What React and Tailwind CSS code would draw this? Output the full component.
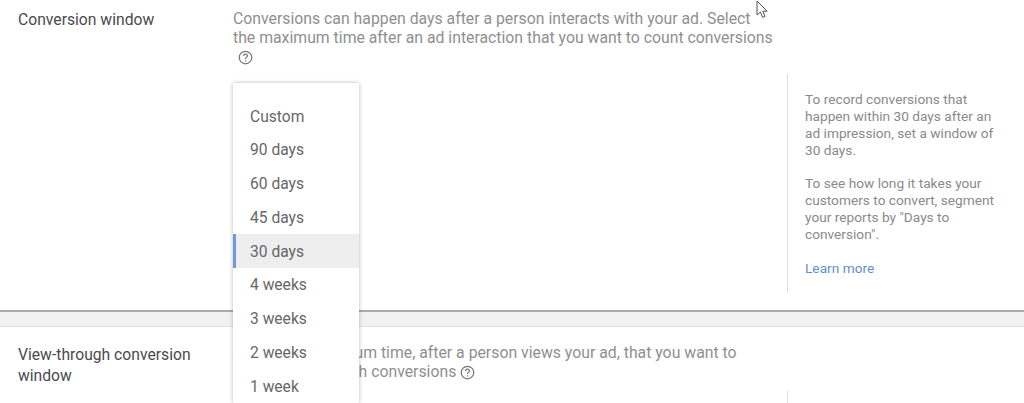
import React from "react";

const options = ["Custom", "90 days", "60 days", "45 days", "30 days", "4 weeks", "3 weeks", "2 weeks", "1 week"];

function HelpIcon() {
  return (
    <svg width="15" height="15" viewBox="0 0 24 24" fill="none" stroke="#757575" strokeWidth="2" className="inline-block align-[-3px]">
      <circle cx="12" cy="12" r="10" />
      <path d="M9 9.6a3 3 0 0 1 6 0c0 2-3 2.4-3 4.6" />
      <path d="M12 16.4v2" />
    </svg>
  );
}

function Cursor() {
  return (
    <svg width="13" height="20" viewBox="0 0 13 20" className="absolute left-[756px] top-0">
      <path d="M1 1v14l3.4-3 2.2 5.4 2.4-1-2.2-5.2h4.4z" fill="#fff" stroke="#555" strokeWidth="1" strokeLinejoin="round" />
    </svg>
  );
}

function Dropdown() {
  return (
    <div className="absolute left-[233px] top-[83px] w-[126px] h-[320px] bg-white pt-[16px] shadow-[0_0_4px_rgba(0,0,0,0.3)]">
      {options.map((o) => (
        <div
          key={o}
          className={
            "h-[33.75px] flex items-center pt-[3px] text-[15.6px] text-[#66666b] " +
            (o === "30 days" ? "bg-[#eeeeee] border-l-[3px] border-[#6f9ad8] pl-[14px]" : "pl-[17px]")
          }
        >
          {o}
        </div>
      ))}
    </div>
  );
}

export default function App() {
  return (
    <div className="relative w-[1024px] h-[403px] overflow-hidden bg-white font-['Roboto',sans-serif]">
      <div className="flex h-[310px]">
        <div className="w-[233px] shrink-0 pl-[18px] pt-[9px] text-[15.7px] leading-[21px] text-[#4a4a4f]">Conversion window</div>
        <div className="w-[554px] shrink-0 pt-[9px] text-[15.8px] leading-[19px] text-[#8f8f8f]">
          <p className="w-[541px]">
            Conversions can happen days after a person interacts with your ad. Select the maximum time after an ad interaction that you want to count conversions
          </p>
          <div className="pl-[5px]"><HelpIcon /></div>
        </div>
        <div className="mt-[74px] h-[219px] flex-1 border-l border-[#dddddd] pl-[17px] pr-[20px] pt-[17px] text-[13.7px] leading-[17px] text-[#8a8a8a]">
          <p>To record conversions that happen within 30 days after an ad impression, set a window of 30 days.</p>
          <p className="mt-[16px]">To see how long it takes your customers to convert, segment your reports by "Days to conversion".</p>
          <p className="mt-[17px] text-[#5f8fd0]">Learn more</p>
        </div>
      </div>
      <div className="h-[17px] border-t-2 border-b border-t-[#aaaaaa] border-b-[#e0e0e0] bg-[#f2f2f2]" />
      <div className="flex">
        <div className="w-[233px] shrink-0 pl-[18px] pr-[20px] pt-[17px] text-[15.7px] leading-[21px] text-[#4a4a4f]">View-through conversion window</div>
        <div className="w-[554px] shrink-0 pt-[16px] text-[15.8px] leading-[19px] text-[#8f8f8f]">
          <p className="w-[510px]">
            Select the maximum time, after a person views your ad, that you want to count view-through conversions <HelpIcon />
          </p>
        </div>
        <div className="mt-[64px] h-[20px] flex-1 border-l border-[#dddddd]" />
      </div>
      <Dropdown />
      <Cursor />
    </div>
  );
}
